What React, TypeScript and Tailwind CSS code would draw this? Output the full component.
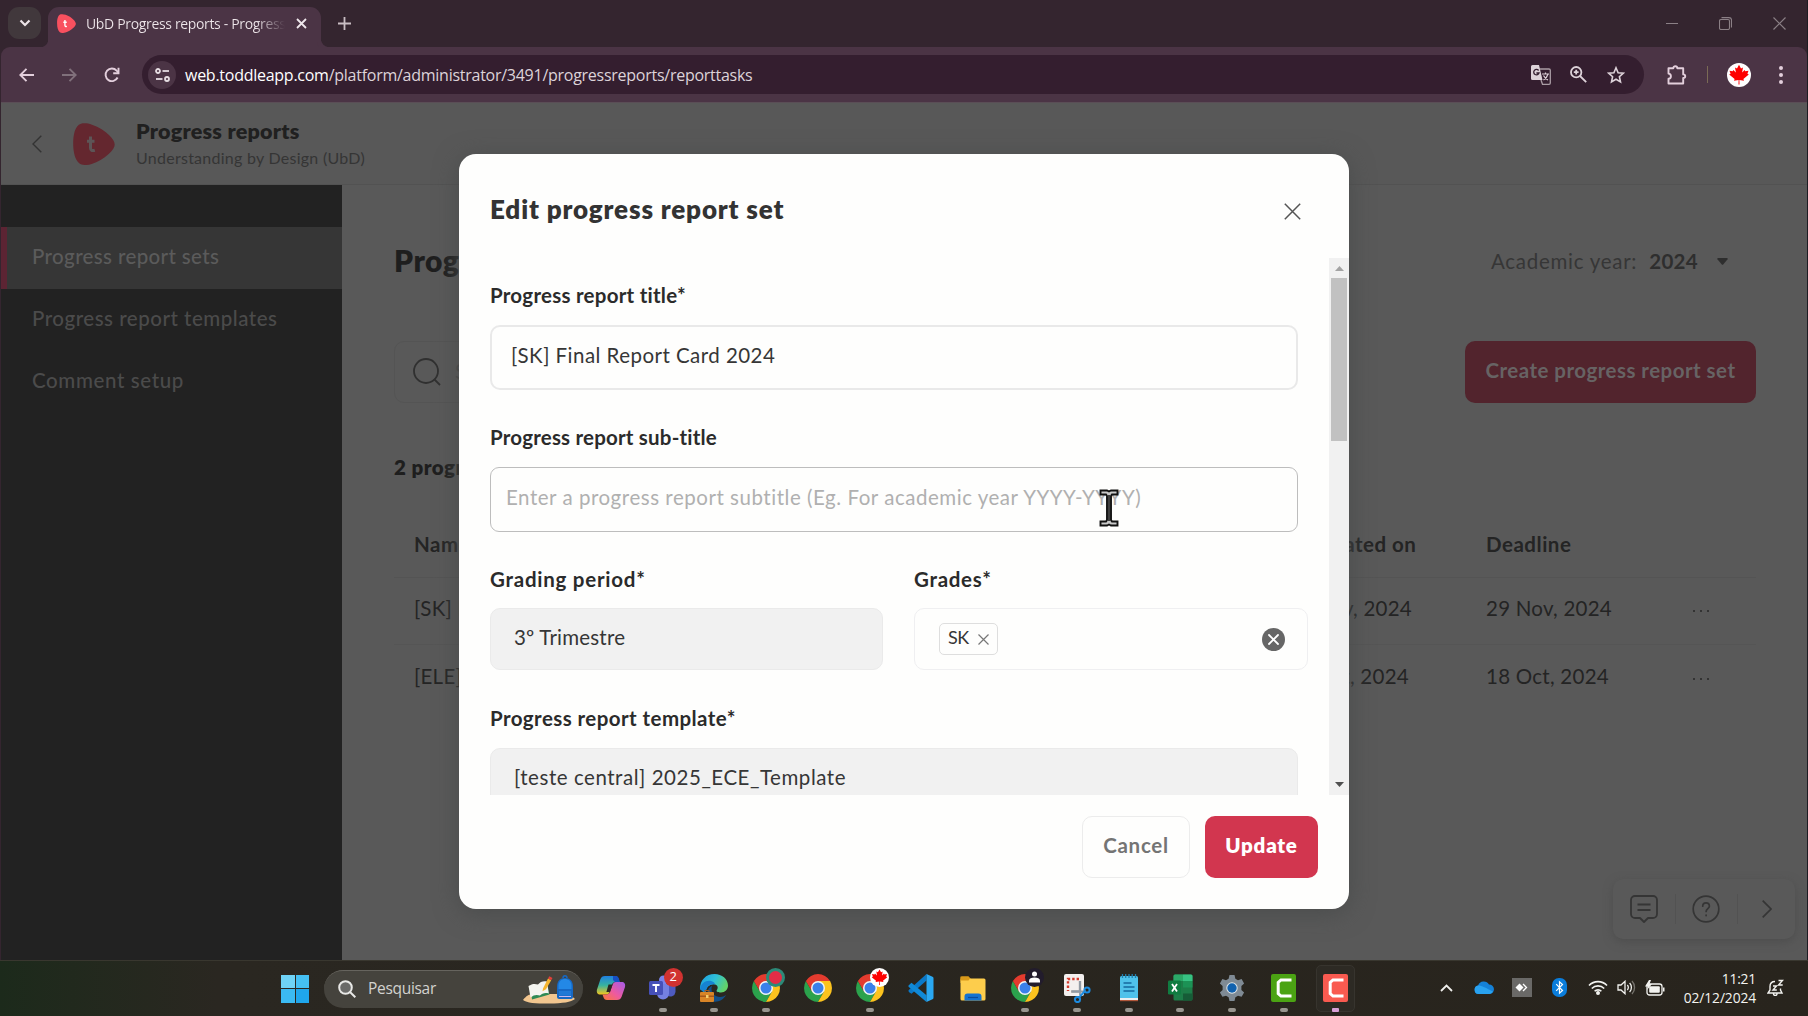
import type { ReactNode } from "react";

/* ---------- shared drawings ---------- */

function MapleLeaf({ className }: { className?: string }) {
  return (
    <svg viewBox="0 0 24 24" className={className}>
      <circle cx="12" cy="12" r="12" fill="#fff" />
      <path
        fill="#fe0000"
        d="M12 1.8l2 3.6 2-1-.9 5 2.6-2.5.6 1.4 3.2-.6-1.1 3.1 1.4.8-5.4 4.4.6 1.7-4.6-.7.1 4.6h-1l.1-4.6-4.6.7.6-1.7-5.4-4.4 1.400-.8-1.1-3.1 3.2.6.6-1.4 2.6 2.5-.9-5 2 1z"
      />
    </svg>
  );
}

function ToddleMark({ className, fill, letter }: { className?: string; fill: string; letter: string }) {
  return (
    <svg viewBox="0 0 42 42" className={className}>
      <path
        fill={fill}
        d="M8 .8C11 0 15 .3 19 1.8c7 2.4 13 6.200 17.500 10.800 3.300 3.400 5.200 6.400 5.200 9 0 3-2.200 6-6 9.400-5 4.600-11 8-17 10-4.500 1.400-9.500 1.600-12.500-.8C2.200 37 .3 29.500.2 21.500.1 13 1.500 2.800 8 .8z"
      />
      <path fill="none" stroke={letter} strokeWidth="3" d="M17.500 13.500v11.500c0 2.300 1.600 3.100 4.300 2.300M14 18.200h7.500" />
    </svg>
  );
}

function Chrome({ badge }: { badge?: ReactNode }) {
  return (
    <div className="relative size-[28px]">
      <svg viewBox="0 0 28 28" className="size-[28px]">
        <path fill="#2ba24c" d="M1.900 7A14 14 0 0 0 14 28l6-10.500-12 0z" />
        <path fill="#fcc31e" d="M14 7h12.100A14 14 0 0 1 14 28l6-10.500z" />
        <path fill="#e33b2e" d="M1.900 7A14 14 0 0 1 26.100 7H14L8 17.500z" />
        <circle cx="14" cy="14" r="7" fill="#f1f5f4" />
        <circle cx="14" cy="14" r="5.500" fill="#3a80e9" />
      </svg>
      {badge}
    </div>
  );
}

/* ---------- browser chrome ---------- */

function TabStrip() {
  return (
    <div className="flex h-[47px] shrink-0 bg-[#34252f]">
      <div className="ml-[7px] mt-[7px] flex h-[32px] w-[33px] items-center justify-center rounded-[11px] bg-[#41383c]">
        <svg width="12" height="8" viewBox="0 0 12 8" fill="none" stroke="#ece4e8" strokeWidth="2.200">
          <path d="M1.500 1.500L6 6l4.500-4.500" />
        </svg>
      </div>
      <div className="flex items-end">
        <div className="size-[7px] rounded-br-[8px] shadow-[3px_3px_0_1px_#4b3445]" />
      </div>
      <div className="mt-[7px] flex h-[40px] w-[273px] items-center rounded-t-[11px] bg-[#4b3445] pb-[8px]">
        <ToddleMark className="ml-[9px] size-[19px]" fill="#f9505f" letter="#fff" />
        <div className="ml-[10px] w-[199px] overflow-hidden whitespace-nowrap bg-gradient-to-r from-[#eee6ea] from-85% to-transparent bg-clip-text font-['Open_Sans',sans-serif] text-[14px] tracking-[-0.34px] text-transparent">
          UbD Progress reports - Progress
        </div>
        <svg className="ml-[11px]" width="11" height="11" viewBox="0 0 11 11" stroke="#efe7ec" strokeWidth="1.800">
          <path d="M1 1l9 9M10 1l-9 9" />
        </svg>
      </div>
      <div className="flex items-end">
        <div className="size-[8px] rounded-bl-[8px] shadow-[-3px_3px_0_1px_#4b3445]" />
      </div>
      <svg className="ml-[9px] mt-[17px]" width="13" height="13" viewBox="0 0 13 13" stroke="#c9bec4" strokeWidth="1.800">
        <path d="M6.500 0v13M0 6.500h13" />
      </svg>
      <div className="ml-auto mr-[21px] flex h-[46px] items-center gap-[41px] text-[#8b8086]">
        <svg width="12" height="12" viewBox="0 0 12 12" stroke="currentColor">
          <path d="M0 6.500h12" />
        </svg>
        <svg width="13" height="13" viewBox="0 0 13 13" stroke="currentColor" fill="none" strokeWidth="1.100">
          <rect x=".5" y="2.500" width="10" height="10" rx="1.500" />
          <path d="M2.500.6h7.500a2.500 2.500 0 0 1 2.500 2.500v7.500" />
        </svg>
        <svg width="13" height="13" viewBox="0 0 13 13" stroke="currentColor" strokeWidth="1.200">
          <path d="M.5.5l12 12M12.500.5l-12 12" />
        </svg>
      </div>
    </div>
  );
}

function Toolbar() {
  return (
    <div className="flex h-[56px] shrink-0 items-center rounded-t-[9px] border-b border-[#5a4e56] bg-[#4b3445]">
      <svg className="ml-[18px]" width="15" height="14" viewBox="0 0 15 14" fill="none" stroke="#e3cfdc" strokeWidth="1.900">
        <path d="M15 7H1.500M7.500.8L1.300 7l6.200 6.200" />
      </svg>
      <svg className="ml-[28px]" width="15" height="14" viewBox="0 0 15 14" fill="none" stroke="#80707b" strokeWidth="1.900">
        <path d="M0 7h13.500M7.500.8L13.700 7l-6.200 6.200" />
      </svg>
      <svg className="ml-[27px]" width="16" height="16" viewBox="0 0 16 16" fill="none" stroke="#e3cfdc" strokeWidth="1.900">
        <path d="M13.600 10.500A6.300 6.300 0 1 1 12.600 3.600L14.500 5.500" />
        <path d="M14.500.8v5.400H9.200" />
      </svg>
      <div className="ml-[22px] flex h-[39px] w-[1502px] items-center rounded-full bg-[#341e2f]">
        <div className="ml-[6px] flex size-[28px] items-center justify-center rounded-full bg-[#4b3445]">
          <svg width="15" height="14" viewBox="0 0 15 14" fill="none" stroke="#e6dde2" strokeWidth="1.800">
            <circle cx="3" cy="3" r="2" />
            <path d="M7.500 3H14" />
            <circle cx="12" cy="11" r="2" />
            <path d="M1 11h6.500" />
          </svg>
        </div>
        <div className="ml-[9px] font-['Open_Sans',sans-serif] text-[16px] tracking-[-0.26px] text-[#ddd3d9]">
          <span className="text-white">web.toddleapp.com</span>/platform/administrator/3491/progressreports/reporttasks
        </div>
        <svg className="ml-auto mr-[19px]" width="20" height="20" viewBox="0 0 20 20">
          <path d="M8.500 4H18a1.300 1.300 0 0 1 1.300 1.300V18a1.300 1.300 0 0 1-1.300 1.300h-6.500L10 15" fill="none" stroke="#a99ca4" strokeWidth="1.300" />
          <path d="M11 9h7M14.500 7.500V9M17 9c-.8 3-2.500 4.800-4.500 6M12.500 10.500c1 2 2.500 3.500 4.500 4.500" fill="none" stroke="#d9ccd4" strokeWidth="1.200" />
          <path d="M1.500 0H8l3.500 15H1.500A1.500 1.500 0 0 1 0 13.500v-12A1.500 1.500 0 0 1 1.500 0z" fill="#ddd2d9" />
          <path d="M7.600 5.500A2.700 2.700 0 1 0 8 8H5.400" fill="none" stroke="#341e2f" strokeWidth="1.300" />
        </svg>
        <svg className="mr-[20px]" width="17" height="17" viewBox="0 0 17 17" fill="none" stroke="#ddd2d9" strokeWidth="1.800">
          <circle cx="6.200" cy="6.200" r="5.200" />
          <path d="M10 10l6.200 6.200M6.200 3.800v4.800M3.800 6.200h4.800" />
        </svg>
        <svg className="mr-[19px]" width="18" height="18" viewBox="0 0 18 18" fill="none" stroke="#ddd2d9" strokeWidth="1.600">
          <path d="M9 1.800l2.100 4.900 5.200.5-3.900 3.500 1.100 5.200L9 13.200l-4.500 2.700 1.100-5.200L1.700 7.200l5.200-.5z" />
        </svg>
      </div>
      <svg className="ml-[23px]" width="20" height="20" viewBox="0 0 20 20" fill="none" stroke="#e3cfdc" strokeWidth="1.900">
        <path
          strokeLinejoin="round"
          d="M1.500 3.200H6.300C6.300.6 10.300.6 10.300 3.200h5.900v6.200c2.700 0 2.700 3.600 0 3.600v5.500H1.500v-4.700c3.200-.2 3.200-5 0-5.200z"
        />
      </svg>
      <div className="ml-[20px] h-[17px] w-px bg-[#7a6a55]" />
      <MapleLeaf className="ml-[19px] size-[24px]" />
      <div className="ml-[28px] flex flex-col gap-[3px]">
        <i className="size-[4px] rounded-full bg-[#e3cfdc]" />
        <i className="size-[4px] rounded-full bg-[#e3cfdc]" />
        <i className="size-[4px] rounded-full bg-[#e3cfdc]" />
      </div>
    </div>
  );
}

/* ---------- dimmed application page ---------- */

function AppHeader() {
  return (
    <div className="flex h-[82px] shrink-0 items-center border-b border-[#525252] bg-[#585858]">
      <svg className="ml-[31px]" width="10" height="18" viewBox="0 0 10 18" fill="none" stroke="#333" strokeWidth="1.400">
        <path d="M9.300.7L1 9l8.300 8.300" />
      </svg>
      <ToddleMark className="ml-[31px] size-[42px]" fill="#64272f" letter="#5d5557" />
      <div className="ml-[21px] flex flex-col">
        <span className="h-[27px] text-[21.500px] leading-[27px] font-extrabold tracking-[0.25px] text-[#202020]">Progress reports</span>
        <span className="h-[25px] text-[16px] leading-[25px] tracking-[0.26px] text-[#353535]">Understanding by Design (UbD)</span>
      </div>
    </div>
  );
}

function Sidebar() {
  return (
    <div className="flex w-[341px] shrink-0 flex-col bg-[#222] pt-[42px] text-[20.5px] font-medium text-[#4b4b4b]">
      <div className="flex h-[62px] items-center border-l-[6px] border-[#5c2433] bg-[#363636] pb-[4px] pl-[25px] tracking-[0.37px] text-[#5b5b5b]">
        Progress report sets
      </div>
      <div className="flex h-[62px] items-center pb-[4px] pl-[31px] tracking-[0.51px]">Progress report templates</div>
      <div className="flex h-[62px] items-center pb-[4px] pl-[31px] tracking-[0.62px]">Comment setup</div>
    </div>
  );
}

const reportSets = [
  { name: "[SK] Final Report Card 2024", created: "27 Nov, 2024", deadline: "29 Nov, 2024" },
  { name: "[ELE] Report Card 2024", created: "17 Oct, 2024", deadline: "18 Oct, 2024" },
];

function MainPanel() {
  return (
    <div className="relative flex min-w-0 grow flex-col bg-[#595959] pr-[51px] pl-[52px] text-[20.5px] text-[#242424]">
      <div className="mt-[48px] flex h-[56px] items-center justify-between">
        <h1 className="pb-[2px] text-[30px] font-extrabold tracking-[0.5px] text-[#1e1e1e]">Progress report sets</h1>
        <div className="mr-[28px] flex items-center text-[#363636]">
          <span className="tracking-[0.73px]">Academic year:</span>
          <span className="ml-[12px] font-bold tracking-[0.3px] text-[#2e2e2e]">2024</span>
          <svg className="ml-[19px]" width="11" height="7" viewBox="0 0 11 7" fill="#2e2e2e">
            <path d="M1 0h9a.8.8 0 0 1 .6 1.300L6.200 6.500a1 1 0 0 1-1.400 0L.4 1.300A.8.8 0 0 1 1 0z" />
          </svg>
        </div>
      </div>
      <div className="mt-[51.5px] flex h-[62px] justify-between">
        <div className="flex w-[460px] items-center rounded-[10px] border border-[#545454] pl-[18px] text-[#484848]">
          <svg width="28" height="28" viewBox="0 0 28 28" fill="none" stroke="#303030" strokeWidth="1.800">
            <circle cx="13" cy="13" r="12" />
            <path d="M21.500 21.500l5.500 5.500" />
          </svg>
          <span className="ml-[14px]">Search</span>
        </div>
        <div className="flex w-[291px] items-center justify-center rounded-[10px] bg-[#52242d] pb-[2px] font-bold tracking-[0.47px] text-[#676364]">
          Create progress report set
        </div>
      </div>
      <div className="mt-[49.5px] h-[30px] text-[20.5px] leading-[30px] font-extrabold tracking-[0.45px] text-[#1e1e1e]">2 progress report sets</div>
      <div className="mt-[30px] grid h-[66px] grid-cols-[872px_200px_1fr] items-center border-b border-[#545454] pl-[20px] font-bold tracking-[0.52px]">
        <span>Name</span>
        <span className="tracking-[0.5px]">Generated on</span>
        <span>Deadline</span>
      </div>
      <div className="flex flex-col divide-y divide-[#555]">
        {reportSets.map((r) => (
          <div key={r.name} className="grid h-[67px] grid-cols-[872px_200px_1fr_63px] items-center pb-[5px] pl-[20px] tracking-[0.25px]">
            <span>{r.name}</span>
            <span>{r.created}</span>
            <span>{r.deadline}</span>
            <span className="flex gap-[5px] pt-[5px]">
              <i className="size-[2px] bg-[#333]" />
              <i className="size-[2px] bg-[#333]" />
              <i className="size-[2px] bg-[#333]" />
            </span>
          </div>
        ))}
      </div>
      <div className="absolute right-[12px] bottom-[21px] flex h-[60px] w-[182px] items-center rounded-[10px] bg-[#595959] text-[#353535] shadow-[0_3px_10px_0_#4e4e4e]">
        <svg className="ml-[17px]" width="28" height="28" viewBox="0 0 28 28" fill="none" stroke="currentColor" strokeWidth="1.800">
          <path strokeLinejoin="round" d="M5 1h18a4 4 0 0 1 4 4v14a4 4 0 0 1-4 4h-5l-4 4-4-4H5a4 4 0 0 1-4-4V5a4 4 0 0 1 4-4z" />
          <path d="M7.500 9.500h13M7.500 15h13" />
        </svg>
        <div className="ml-[17px] h-[30px] w-px bg-[#525252]" />
        <svg className="ml-[16px]" width="28" height="28" viewBox="0 0 28 28" fill="none" stroke="currentColor" strokeWidth="1.700">
          <circle cx="14" cy="14" r="12.800" />
          <path strokeLinecap="round" d="M10.700 11.200c0-4.500 6.700-4.500 6.700 0 0 2.400-3.300 2.600-3.300 5.300M14.100 20v.6" />
        </svg>
        <div className="ml-[17px] h-[30px] w-px bg-[#525252]" />
        <svg className="ml-[24px]" width="10" height="18" viewBox="0 0 10 18" fill="none" stroke="currentColor" strokeWidth="1.700">
          <path d="M.7.700L9 9 .7 17.300" />
        </svg>
      </div>
    </div>
  );
}

/* ---------- dialog ---------- */

function Label({ children, className }: { children: ReactNode; className: string }) {
  return <div className={`h-[28px] text-[20.5px] leading-[28px] font-bold text-[#2b2b2b] ${className}`}>{children}</div>;
}

function EditDialog() {
  return (
    <div className="absolute top-[154px] left-[459px] flex h-[755px] w-[890px] flex-col rounded-[17px] bg-[#fefefd] text-[20.5px] text-[#363636] shadow-[0_4px_24px_#4a4c4c]">
      <div className="flex h-[104px] shrink-0 items-center justify-between pt-[10px] pr-[48px] pl-[31px]">
        <h2 className="pb-[4px] text-[26px] font-extrabold tracking-[0.85px] text-[#333]">Edit progress report set</h2>
        <svg width="17" height="17" viewBox="0 0 17 17" fill="none" stroke="#555" strokeWidth="1.500">
          <path d="M.8.800l15.400 15.400M16.200.8L.8 16.200" />
        </svg>
      </div>

      <div className="flex h-[537px] shrink-0 overflow-hidden">
        <div className="w-[870px] shrink-0 pt-[23px] pl-[31px]">
          <Label className="tracking-[0.25px]">Progress report title*</Label>
          <div className="mt-[16px] flex h-[65px] w-[808px] items-center rounded-[10px] border-2 border-[#e9e9e9] pb-[5px] pl-[19px] tracking-[0.46px]">
            [SK] Final Report Card 2024
          </div>
          <Label className="mt-[33px] tracking-[0.2px]">Progress report sub-title</Label>
          <div className="relative mt-[16px] flex h-[65px] w-[808px] items-center rounded-[9px] border border-[#bdbdbd] pb-[4px] pl-[15px] tracking-[0.53px] text-[#b0b0b0]">
            Enter a progress report subtitle (Eg. For academic year YYYY-YYYY)
            <svg className="absolute top-[21px] left-[608px]" width="20" height="38" viewBox="0 0 20 38">
              <path
                d="M1.500 1.500h6.500l2 1 2-1h6.500v4h-5.500l-1 1.500v24l1 1.500h5.500v4H12l-2-1-2 1H1.500v-4H7l1-1.500V7L7 5.500H1.500z"
                fill="#c9c9c9"
                stroke="#111"
                strokeWidth="1.900"
              />
              <path d="M10 6v26" stroke="#111" strokeWidth="1.500" />
            </svg>
          </div>
          <div className="mt-[33px] flex gap-[31px]">
            <div>
              <Label className="tracking-[0.75px]">Grading period*</Label>
              <div className="mt-[15px] flex h-[62px] w-[393px] items-center rounded-[10px] border border-[#eaeaea] bg-[#f1f1f1] pb-[3px] pl-[23px] tracking-[0.2px]">
                3º Trimestre
              </div>
            </div>
            <div>
              <Label className="tracking-[0.7px]">Grades*</Label>
              <div className="mt-[15px] flex h-[62px] w-[394px] items-center rounded-[10px] border border-[#efeff1] pr-[22px] pl-[24px]">
                <div className="flex h-[32px] w-[59px] items-center rounded-[5px] border border-[#dedede] pl-[8px] text-[18px]">
                  <span className="pb-[3px] tracking-[-0.5px]">SK</span>
                  <svg className="ml-[9px]" width="11" height="11" viewBox="0 0 11 11" stroke="#777" strokeWidth="1.200">
                    <path d="M.5.5l10 10M10.500.5l-10 10" />
                  </svg>
                </div>
                <svg className="ml-auto" width="23" height="23" viewBox="0 0 23 23">
                  <circle cx="11.500" cy="11.500" r="11.500" fill="#666" />
                  <path d="M7 7l9 9M16 7l-9 9" stroke="#fff" strokeWidth="1.800" strokeLinecap="round" />
                </svg>
              </div>
            </div>
          </div>
          <Label className="mt-[34px] tracking-[0.43px]">Progress report template*</Label>
          <div className="mt-[16px] flex h-[62px] w-[808px] items-center rounded-[10px] border border-[#eaeaea] bg-[#f1f1f1] pb-[3px] pl-[23px] tracking-[0.54px]">
            [teste central] 2025_ECE_Template
          </div>
        </div>
        <div className="flex h-[537px] w-[20px] flex-col items-center bg-[#f1f1f1]">
          <svg className="mt-[8px] shrink-0" width="9" height="5" viewBox="0 0 9 5" fill="#a3a3a3">
            <path d="M4.500 0L9 5H0z" />
          </svg>
          <div className="mt-[7px] h-[163px] w-[16px] shrink-0 bg-[#c1c1c1]" />
          <svg className="mt-auto mb-[8px] shrink-0" width="9" height="5" viewBox="0 0 9 5" fill="#505050">
            <path d="M4.500 5L9 0H0z" />
          </svg>
        </div>
      </div>

      <div className="flex justify-end gap-[15px] pt-[21px] pr-[31px]">
        <div className="flex h-[62px] w-[108px] items-center justify-center rounded-[10px] border border-[#ececec] pb-[3px] font-bold tracking-[0.72px] text-[#747474]">
          Cancel
        </div>
        <div className="flex h-[62px] w-[113px] items-center justify-center rounded-[10px] bg-[#d2364f] pb-[3px] font-extrabold tracking-[0.75px] text-white">
          Update
        </div>
      </div>
    </div>
  );
}

/* ---------- Windows taskbar ---------- */

function Copilot() {
  return (
    <svg viewBox="0 0 30 28" width="30" height="28">
      <defs>
        <linearGradient id="cpA" x1="0" y1="0" x2="0" y2="1">
          <stop offset="0" stopColor="#1f7fe0" />
          <stop offset=".5" stopColor="#36b3a0" />
          <stop offset="1" stopColor="#f5c51b" />
        </linearGradient>
        <linearGradient id="cpB" x1="1" y1="0" x2="0" y2="1">
          <stop offset="0" stopColor="#a45bea" />
          <stop offset=".55" stopColor="#ee5a9e" />
          <stop offset="1" stopColor="#fb7a33" />
        </linearGradient>
      </defs>
      <path fill="url(#cpA)" d="M9 2h10c2 0 3 1 3.600 3l.9 3h-4c-2 0-3 1-3.700 3l-2.300 7c-.6 2-1.600 2.500-3.500 2.500H4.500C1.500 20.500.3 18.500 1 15.500L4.300 5.500C5.200 3 6.500 2 9 2z" />
      <path fill="#164fc4" d="M17 2h2.500c2 0 3 1 3.500 3l1 3.500h-4.500L17 6z" />
      <path fill="url(#cpB)" d="M21 26H11c-2 0-3-1-3.600-3l-.9-2.500h4c2 0 3-1 3.700-3l2.300-6.500c.6-2 1.600-3 3.500-3h5.500c3 0 4.200 2 3.500 5L25.700 22.500C24.800 25 23.500 26 21 26z" />
      <path fill="#2a2720" d="M12.500 10.500h4L14 18h-3.600z" />
    </svg>
  );
}

function Teams() {
  return (
    <div className="relative h-[28px] w-[30px]">
      <svg viewBox="0 0 30 28" width="30" height="28">
        <circle cx="15.500" cy="6" r="4.500" fill="#7b83eb" />
        <path fill="#4e5bc0" d="M19 10h8.500v8a5 5 0 0 1-8.500 3z" />
        <path fill="#7480e0" d="M9 10h12v9.500a6 6 0 0 1-12 0z" />
        <rect x="1" y="7" width="14" height="14" rx="1.500" fill="#4650b8" />
        <path stroke="#fff" strokeWidth="1.900" d="M4.500 11h7M8 11v7" />
      </svg>
      <div className="absolute -top-[6px] -right-[5px] flex size-[19px] items-center justify-center rounded-full bg-[#d13230] font-['Open_Sans',sans-serif] text-[13px] text-white">
        2
      </div>
    </div>
  );
}

function Edge() {
  return (
    <svg viewBox="0 0 28 28" width="28" height="28">
      <defs>
        <linearGradient id="edA" x1="0" y1="0" x2="1" y2=".4">
          <stop offset="0" stopColor="#1b9de2" />
          <stop offset=".55" stopColor="#2fc0d8" />
          <stop offset="1" stopColor="#62d36a" />
        </linearGradient>
      </defs>
      <path fill="#134f88" d="M12 12c-2 6 2 11 8 11 3 0 4-.8 6-2-2.500 5-8 7.500-13 6.500C5 26 6 14 12 12z" />
      <path fill="url(#edA)" d="M0 15C0 6 6 0 14.500 0 22 0 28 5 28 11.500c0 4-3 7-7 7-3 0-5.500-1-4-2.800 1.500-2 .5-4.700-2-5.200C10 9.500 5 13 6 20z" />
      <path fill="#1683d2" d="M0 15C1 9 6 6 11 7c3 .7 4 2 4 3.500C10 9.500 5 13 6 20z" />
      <rect x="0" y="18" width="14" height="10" rx="1" fill="#d98527" />
      <path fill="#a6581a" d="M0 21.500h14v1.500H0zM4.500 18v-2h5v2H8.500v-1h-3v1z" />
      <rect x="6" y="21" width="2.500" height="3" fill="#f7cd6c" />
    </svg>
  );
}

function VSCode() {
  return (
    <svg viewBox="0 0 26 28" width="26" height="28">
      <path fill="#0a78c8" d="M18.500 0v6.500L3.500 19.800.8 18l-.3-1.800L18.500 0z" />
      <path fill="#1089d8" d="M.5 11.500L3.500 8.700l15 12.500V28L.5 12.800z" />
      <path fill="#2aa8f2" d="M18.500 0l6 2.800A1.500 1.500 0 0 1 25.500 4.200v19.600a1.500 1.500 0 0 1-1 1.400l-6 2.800z" />
    </svg>
  );
}

function Explorer() {
  return (
    <svg viewBox="0 0 26 26" width="26" height="26">
      <path fill="#d99a1a" d="M.5 3A1.500 1.500 0 0 1 2 1.500h6.500L11 4v4H.5z" />
      <rect x=".5" y="3.500" width="25" height="22" rx="1.500" fill="#fdcd4c" />
      <path fill="#d99a1a" d="M.5 1.500h8l1.500 2-1.500 2h-8z" />
      <path fill="#1573d0" d="M4.500 25.500v-4a3 3 0 0 1 3-3h11a3 3 0 0 1 3 3v4z" />
      <path stroke="#0a4c9c" strokeWidth="1.200" d="M8 22.500h10" />
    </svg>
  );
}

function Snip() {
  return (
    <svg viewBox="0 0 28 30" width="28" height="30">
      <rect x="1" y="1" width="20" height="22" rx="2" fill="#f3f0ef" />
      <path fill="none" stroke="#d33a2c" strokeWidth="2.400" strokeDasharray="2.400 2" d="M16 6H5v12" />
      <path fill="none" stroke="#a4a2a3" strokeWidth="2.400" d="M8 18.500h9V8" />
      <path stroke="#8f9aa5" strokeWidth="1.800" d="M17 8v14M9 18.500h14" />
      <g fill="none" stroke="#1c8be0" strokeWidth="2">
        <circle cx="24" cy="17" r="2.600" />
        <circle cx="14.500" cy="26.500" r="2.600" />
        <path d="M21.500 18.500L16 24.500" />
      </g>
    </svg>
  );
}

function Notepad() {
  return (
    <svg viewBox="0 0 20 29" width="20" height="29">
      <rect x="1" y="3" width="18" height="24" rx="1.500" fill="#4fc2ea" />
      <path fill="#e8eef0" d="M1 25h18v2.500H1z" />
      <path fill="#b0573a" d="M1 27h18v1.200H1z" />
      <path stroke="#16699f" strokeWidth="1.700" d="M4.500 10h8M4.500 14h11M4.500 18h11" />
      <path stroke="#1f7fae" strokeWidth="1.300" d="M3.500 1v4M6.700 1v4M10 1v4M13.200 1v4M16.500 1v4" />
    </svg>
  );
}

function Excel() {
  return (
    <svg viewBox="0 0 25 27" width="25" height="27">
      <rect x="5.500" y=".5" width="19" height="26" rx="1.500" fill="#1d7d48" />
      <path fill="#2ba868" d="M5.500 2A1.500 1.500 0 0 1 7 .5h8v6.500H5.500z" />
      <path fill="#37c282" d="M15 .5h8A1.500 1.500 0 0 1 24.500 2v5H15z" />
      <path fill="#1c9255" d="M15 7h9.500v6.500H15z" />
      <path fill="#165c37" d="M15 19.500h9.500V25a1.500 1.500 0 0 1-1.500 1.500h-8z" />
      <rect x="0" y="6.500" width="13" height="14" rx="1.300" fill="#107c41" />
      <path stroke="#fff" strokeWidth="1.800" d="M4 10l5 7.500M9 10l-5 7.500" />
    </svg>
  );
}

function Gear() {
  return (
    <svg viewBox="0 0 26 28" width="26" height="28">
      <path
        fill="#7f8a94"
        d="M10.500 1h5l.9 3.700 2.600 1.500 3.600-1.100 2.500 4.300-2.700 2.600v3.900l2.700 2.600-2.500 4.300-3.600-1.100-2.600 1.500-.9 3.800h-5l-.9-3.800L7 21.700l-3.600 1.100L.9 18.500l2.700-2.600V12L.9 9.400l2.500-4.300L7 6.200l2.600-1.500z"
      />
      <circle cx="13" cy="14" r="5.700" fill="#dfe6ea" />
      <circle cx="13" cy="14" r="4.700" fill="#1161ae" />
    </svg>
  );
}

function Camtasia({ tone }: { tone: string }) {
  return (
    <div className={`flex h-[28px] w-[25px] items-center justify-center rounded-[2px] ${tone}`}>
      <svg viewBox="0 0 16 20" width="16" height="20" fill="none" stroke="#fff" strokeWidth="3">
        <path d="M15.500 2H5L2.200 4.500v11L5 18h10.500" />
      </svg>
    </div>
  );
}

type TaskbarApp = { id: string; icon: ReactNode; run: boolean };

const apps: TaskbarApp[] = [
  { id: "copilot", icon: <Copilot />, run: false },
  { id: "teams", icon: <Teams />, run: true },
  { id: "edge", icon: <Edge />, run: true },
  {
    id: "chrome-a",
    icon: (
      <Chrome
        badge={<span className="absolute -top-[6px] -right-[5px] size-[19px] rounded-full border-[3px] border-[#2c8a78] bg-[#e22c46]" />}
      />
    ),
    run: true,
  },
  { id: "chrome-b", icon: <Chrome />, run: false },
  { id: "chrome-c", icon: <Chrome badge={<MapleLeaf className="absolute -top-[6px] -right-[5px] size-[19px]" />} />, run: true },
  { id: "vscode", icon: <VSCode />, run: false },
  { id: "explorer", icon: <Explorer />, run: false },
  {
    id: "chrome-d",
    icon: (
      <Chrome
        badge={
          <svg className="absolute -top-[6px] -right-[5px] size-[19px]" viewBox="0 0 19 19">
            <circle cx="9.500" cy="9.500" r="9.500" fill="#221c2c" />
            <circle cx="9.500" cy="6" r="2.500" fill="#fff" />
            <path fill="#fff" d="M4 14.500v-2c0-2 2.500-3 5.500-3s5.500 1 5.500 3v2z" />
          </svg>
        }
      />
    ),
    run: true,
  },
  { id: "snip", icon: <Snip />, run: true },
  { id: "notepad", icon: <Notepad />, run: true },
  { id: "excel", icon: <Excel />, run: true },
  { id: "settings", icon: <Gear />, run: true },
  { id: "camtasia", icon: <Camtasia tone="bg-[#4ba313]" />, run: true },
  { id: "recorder", icon: <Camtasia tone="bg-[#f95a50]" />, run: true },
];

function Taskbar() {
  return (
    <div className="flex h-[56px] shrink-0 items-center border-t border-[#39372f] bg-linear-to-r from-[#1c2a1b] via-[#2a2721] via-12% to-[#28241d]">
      <div className="ml-[281px] grid size-[28px] grid-cols-2 gap-px">
        <i className="bg-[#6fd3f6]" />
        <i className="bg-[#45c0f3]" />
        <i className="bg-[#3bbaf2]" />
        <i className="bg-[#1fa6ec]" />
      </div>
      <div className="ml-[15px] flex h-[38px] w-[259px] items-center rounded-full border-t border-[#66645e] bg-[#45433d]">
        <svg className="ml-[14px]" width="18" height="18" viewBox="0 0 18 18" fill="#6a6a68" stroke="#e8e8e6" strokeWidth="2">
          <circle cx="7.500" cy="7.500" r="6.300" />
          <path d="M12 12l5.300 5.300" />
        </svg>
        <span className="ml-[12px] font-['Open_Sans',sans-serif] text-[15.500px] tracking-[-0.3px] text-[#d3d2cf]">Pesquisar</span>
        <svg className="mr-[7px] ml-auto" width="54" height="30" viewBox="0 0 54 30">
          <path fill="#f2c68f" d="M1 26c3-4 6-6 11-6h28c7 0 10 2 13 5-4 3-12 4.500-26 4.500S5 29 1 26z" />
          <path fill="#2f8a55" d="M8.500 14.500l17-4 2 10-17.500 5z" />
          <path fill="#f4f4ef" d="M6.500 12c3.500-2.500 6.500-2.500 9.500-1.500 2-3 6-4 9-3l1.800 12c-4-1-6.800 0-8.800 2-3-1-6-1-9.500 2z" />
          <path fill="#f6b52e" d="M21 14.500l5-10 3.200 1.700-5.200 9-3.500 2z" />
          <path fill="#e2403a" d="M26 4.500l1.300-2.200 3.200 1.600-1.300 2.300z" />
          <path fill="#1668c4" d="M35 13c0-6 3-9 8-9s8 3 8 9v10c0 1-1 2-2 2H37c-1 0-2-1-2-2z" />
          <path fill="#2388e6" d="M36.500 11c.5-4 3-6 6.500-6s6 2 6.500 6v4h-13z" />
          <path fill="none" stroke="#1668c4" strokeWidth="1.500" d="M41 4c0-3 4-3 4 0" />
          <path fill="#2079d6" d="M37 17h12v4.500H37z" />
          <path stroke="#c7b8ee" strokeWidth="1" d="M37 22.500h12" />
        </svg>
      </div>
      <div className="ml-[2px] flex">
        {apps.map((a) => (
          <div key={a.id} className="relative flex h-[56px] w-[51.780px] items-center justify-center pb-[2px]">
            {a.id === "recorder" && <div className="absolute inset-x-[6px] top-[4px] bottom-[5px] rounded-[5px] border border-[#37342e] bg-[#2d2a24]" />}
            <div className="relative">{a.icon}</div>
            {a.run && (
              <div
                className={
                  a.id === "recorder"
                    ? "absolute bottom-[5px] h-[4px] w-[7px] rounded-[1px] bg-[#d8a0d8]"
                    : "absolute bottom-[5px] h-[4px] w-[8px] rounded-full bg-[#98958f]"
                }
              />
            )}
          </div>
        ))}
      </div>
      <div className="mr-[24px] ml-auto flex items-center pb-[2px]">
        <svg width="13" height="8" viewBox="0 0 13 8" fill="none" stroke="#efefec" strokeWidth="1.800">
          <path d="M1 7l5.500-5.500L12 7" />
        </svg>
        <svg className="ml-[21px]" width="20" height="13" viewBox="0 0 20 13">
          <path fill="#1481d8" d="M4.500 13a4.300 4.300 0 0 1-.4-8.500A6 6 0 0 1 15 3.600a4.700 4.700 0 0 1 .5 9.400z" />
          <path fill="#29a2f0" d="M4.500 13a4.300 4.300 0 0 1-.4-8.500c3-.2 8 2.500 14.800 6-.7 1.500-2 2.500-3.500 2.500z" />
        </svg>
        <svg className="ml-[18px]" width="20" height="19" viewBox="0 0 20 19">
          <rect width="20" height="19" fill="#6a6967" />
          <path fill="#fff" d="M3.500 9.500L7.500 5.500l4 4-4 4z" />
          <path fill="none" stroke="#fff" strokeWidth="1.300" d="M11 6l3.500 3.500L11 13" />
        </svg>
        <svg className="ml-[20px]" width="15" height="19" viewBox="0 0 15 19">
          <rect width="15" height="19" rx="7" fill="#0a7ddb" />
          <path fill="none" stroke="#fff" strokeWidth="1.200" d="M4.200 6.200l6.300 6.300-3 2.700V3.800l3 2.700-6.300 6.300" />
        </svg>
        <svg className="ml-[21px]" width="20" height="15" viewBox="0 0 20 15" fill="none" stroke="#f2f2ef" strokeWidth="1.600">
          <path d="M1 5.500a12.500 12.500 0 0 1 18 0M3.800 8.500a8.700 8.700 0 0 1 12.400 0M6.600 11.300a4.700 4.700 0 0 1 6.800 0" />
          <circle cx="10" cy="13" r="1.200" fill="#f2f2ef" />
        </svg>
        <svg className="ml-[9px]" width="19" height="15" viewBox="0 0 19 15" fill="none" stroke="#f2f2ef" strokeWidth="1.300">
          <path d="M1 5h3l4-3.700v12.400L4 10H1zM10.300 5a3.500 3.500 0 0 1 0 5M12.600 3a6.500 6.500 0 0 1 0 9" />
          <path stroke="#77746e" d="M15 1a9.500 9.500 0 0 1 0 13" />
        </svg>
        <svg className="ml-[9px]" width="20" height="16" viewBox="0 0 20 16">
          <rect x="2" y="4" width="15" height="11" rx="2.500" fill="none" stroke="#f2f2ef" strokeWidth="1.300" />
          <rect x="4.200" y="6.200" width="10.600" height="6.600" rx="1" fill="#f2f2ef" />
          <path fill="#f2f2ef" d="M18 7.500h1.500v4H18zM4 0L0 6.500h3L2 10l5-6H4.500L6 0z" />
        </svg>
        <div className="ml-[15px] w-[76px] text-right font-['Open_Sans',sans-serif] text-[13.800px] leading-[19px] whitespace-nowrap text-[#f4f4f1]">
          <div className="tracking-[-0.2px]">11:21</div>
          <div className="tracking-[-0.1px]">02/12/2024</div>
        </div>
        <svg className="ml-[11px]" width="17" height="18" viewBox="0 0 17 18" fill="none" stroke="#f2f2ef" strokeWidth="1.400">
          <path d="M8 2.500C4.500 2.500 3 5 3 7.500v3.500L1 14h14l-1.500-3V9.500M6.500 14.500c0 2.500 3.500 2.500 3.500 0" />
          <path d="M6 7h3.500L6 11h3.800M11.500 1.500h4l-4 4.500h4.200" />
        </svg>
      </div>
    </div>
  );
}

export default function App() {
  return (
    <div className="relative flex h-[1016px] w-[1808px] flex-col overflow-hidden bg-[#1c1c22] font-['Lato',sans-serif]">
      <div className="mr-px flex min-h-0 grow flex-col bg-[#34252f] pl-px">
        <TabStrip />
        <Toolbar />
        <AppHeader />
        <div className="flex min-h-0 grow">
          <Sidebar />
          <MainPanel />
        </div>
      </div>
      <Taskbar />
      <EditDialog />
    </div>
  );
}
